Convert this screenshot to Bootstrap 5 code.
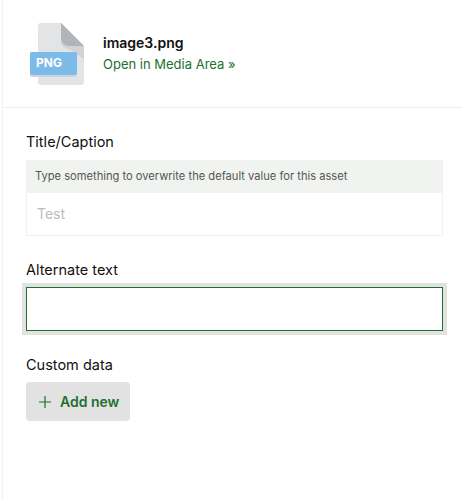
<!DOCTYPE html>
<html lang="en">
<head>
<meta charset="utf-8">
<title>Asset</title>
<link href="https://cdn.jsdelivr.net/npm/bootstrap@5.3.0/dist/css/bootstrap.min.css" rel="stylesheet">
<style>
html,body{height:100%;}
body{font-family:Inter,"Liberation Sans",sans-serif;background:#fff;color:#111;overflow:hidden;}
.asset-pane{margin-left:2px;border-left:1px solid #eff1f2;height:500px;}
.asset-head{height:108px;padding:23px 0 0 24px;border-bottom:1px solid #eceeef;gap:15px;}
.asset-icon{width:62px;height:62px;flex:none;display:block;}
.asset-name{font-size:14px;font-weight:600;line-height:20px;color:#111;margin-top:10px;margin-left:-1px;}
.asset-link{font-size:13px;line-height:20px;color:#1d7030;text-decoration:none;display:block;margin-top:1px;margin-left:-1px;}
.asset-body{padding:0 19px 0 23px;}
.field-label{font-size:14.5px;line-height:20px;color:#111;margin:0;display:block;}
.first-label{margin-top:24px;}
.hint-box{margin-top:8px;background:#f1f3f1;height:33px;line-height:32px;padding-left:9px;font-size:11.15px;color:#555;}
.ghost-input{display:block;width:100%;height:43px;border:1px solid #f0f1f1;border-top:0;border-radius:0;padding:0 10px 2px;font-size:14px;color:#333;box-shadow:none;}
.ghost-input::placeholder{color:#bbb;opacity:1;}
.alt-label{margin-top:24px;}
.focus-input{display:block;width:100%;height:44px;margin-top:7px;border:1px solid #1d7030;border-radius:0;box-shadow:0 0 0 4px #e2e2e2;outline:0;}
.data-label{margin-top:24px;}
.add-btn{margin-top:7px;width:104px;height:39px;background:#e2e2e2;border:0;border-radius:4px;color:#1d7030;font-size:14px;font-weight:600;padding:0 0 0 13px;gap:9px;}
.add-btn:hover{background:#e2e2e2;color:#1d7030;}
.add-btn svg{width:12px;height:12px;flex:none;}
</style>
</head>
<body>
<div class="asset-pane">
  <div class="asset-head d-flex">
    <svg class="asset-icon" viewBox="0 0 62 62" aria-hidden="true">
      <path d="M14 0H34L57 23V59a3 3 0 0 1-3 3H14a3 3 0 0 1-3-3V3a3 3 0 0 1 3-3Z" fill="#e2e4e6"/>
      <path d="M34 0L57 23V36L42 26a8 8 0 0 1-8-8Z" fill="#cfd3d7"/>
      <path d="M34 0L57 23H42a8 8 0 0 1-8-8Z" fill="#b0b5bb"/>
      <rect x="3" y="29" width="47" height="25" rx="2" fill="#c9d3dc"/>
      <rect x="3" y="29" width="47" height="23" rx="2" fill="#7cbbe8"/>
      <text x="9" y="44" font-family="Inter,'Liberation Sans',sans-serif" font-size="12" font-weight="700" fill="#fff">PNG</text>
    </svg>
    <div>
      <div class="asset-name">image3.png</div>
      <a class="asset-link" href="#">Open in Media Area »</a>
    </div>
  </div>
  <form class="asset-body">
    <label class="field-label first-label" for="cap">Title/Caption</label>
    <div class="hint-box">Type something to overwrite the default value for this asset</div>
    <input id="cap" class="ghost-input" type="text" placeholder="Test">
    <label class="field-label alt-label" for="alt">Alternate text</label>
    <input id="alt" class="focus-input" type="text">
    <span class="field-label data-label">Custom data</span>
    <button type="button" class="btn add-btn d-flex align-items-center">
      <svg viewBox="0 0 12 12" aria-hidden="true"><path d="M6 0V12M0 6H12" stroke="#1d7030" stroke-width="1.2" fill="none"/></svg>
      Add new
    </button>
  </form>
</div>
<script src="https://cdn.jsdelivr.net/npm/bootstrap@5.3.0/dist/js/bootstrap.bundle.min.js"></script>
</body>
</html>
